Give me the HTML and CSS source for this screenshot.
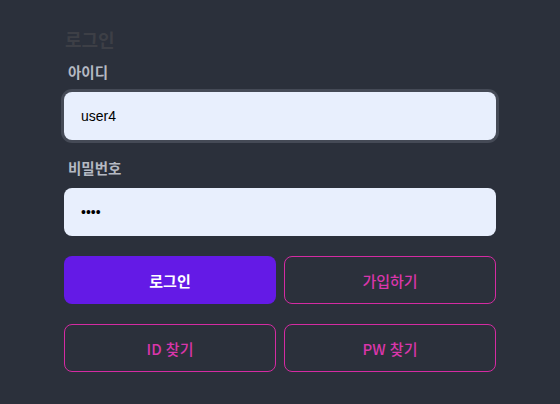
FILE: index.html
```html
<!DOCTYPE html>
<html lang="ko">
<head>
<meta charset="utf-8">
<link rel="stylesheet" href="styles.css">
</head>
<body>
<div class="login">
  <h1 class="title">로그인</h1>
  <form class="form">
    <label class="label" for="uid">아이디</label>
    <input class="input input-focus" id="uid" type="text" value="user4">
    <label class="label label-pw" for="pw">비밀번호</label>
    <input class="input" id="pw" type="password" value="1234">
    <div class="btn-grid">
      <button type="button" class="btn btn-primary">로그인</button>
      <button type="button" class="btn btn-outline">가입하기</button>
      <button type="button" class="btn btn-outline">ID 찾기</button>
      <button type="button" class="btn btn-outline">PW 찾기</button>
    </div>
  </form>
</div>
</body>
</html>
```
FILE: styles.css
```css
html, body {
  margin: 0;
  padding: 0;
  background: #2b303b;
  height: 100%;
}
body {
  font-family: "Noto Sans CJK KR", "Noto Sans", sans-serif;
}
.login {
  width: 432px;
  padding: 27px 0 0 64px;
}
.title {
  margin: 0;
  font-size: 18px;
  line-height: 24px;
  font-weight: 700;
  color: #3d3f46;
  padding-left: 1px;
}
.form {
  display: flex;
  flex-direction: column;
  margin-top: 11px;
}
.label {
  font-size: 14.5px;
  line-height: 20px;
  font-weight: 700;
  color: #b5b9c3;
  padding-left: 4px;
  margin-bottom: 10px;
}
.label-pw {
  margin-top: 18px;
}
.input {
  box-sizing: border-box;
  width: 432px;
  height: 48px;
  margin: 0;
  border: none;
  border-radius: 8px;
  background: #e8effd;
  padding: 0 17px;
  font-family: "Liberation Sans", Arial, sans-serif;
  font-size: 14px;
  color: #000;
  outline: none;
}
.input-focus {
  box-shadow: 0 0 0 3px #454a56;
}
.btn-grid {
  display: grid;
  grid-template-columns: 1fr 1fr;
  column-gap: 8px;
  row-gap: 20px;
  margin-top: 20px;
}
.btn {
  box-sizing: border-box;
  height: 48px;
  border-radius: 8px;
  font-family: "Noto Sans CJK KR", "Noto Sans", sans-serif;
  font-size: 15px;
  cursor: pointer;
}
.btn-primary {
  background: #641ae6;
  border: none;
  color: #ffffff;
  font-weight: 700;
}
.btn-outline {
  background: transparent;
  border: 1px solid #d42ba2;
  color: #d936aa;
  font-weight: 500;
}
```
